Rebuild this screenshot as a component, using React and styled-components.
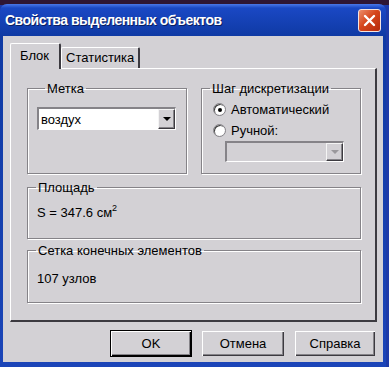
import React from 'react'
import styled, { createGlobalStyle } from 'styled-components'

const face = '#d3d1d5'
const shadow = '#858388'
const dark = '#3c3a40'

const Global = createGlobalStyle`
  html, body {
    margin: 0;
    padding: 0;
    background: linear-gradient(#2e1634 0, #2e1634 5px, #1d3aa8 5px);
    font-family: "Liberation Sans", Arial, sans-serif;
    font-size: 13px;
    color: #000;
  }
`

const Window = styled.div`
  width: 386px;
  margin-top: 4px;
  box-sizing: border-box;
  padding: 0 3px 5px 3px;
  border-radius: 7px 7px 0 0;
  background: linear-gradient(#4a78e8 0, #1a48c4 4px, #0f3aa4 32px, #1b45b8 100%);
  display: flex;
  flex-direction: column;
`

const TitleBar = styled.div`
  height: 32px;
  display: flex;
  align-items: center;
  justify-content: space-between;
  padding: 0 2px 0 2px;
`

const Title = styled.span`
  color: #fff;
  font-weight: bold;
  font-size: 14px;
  letter-spacing: -0.5px;
  text-shadow: 1px 1px 0 #0a1e60;
`

const CloseButton = styled.div`
  width: 21px;
  height: 21px;
  margin-top: 1px;
  border-radius: 3px;
  border: 1px solid #f4e4e0;
  background: linear-gradient(135deg, #ec8e6c 0%, #d6461c 45%, #b52a0c 100%);
  display: flex;
  align-items: center;
  justify-content: center;
`

const Body = styled.div`
  background: ${face};
  padding: 7px 6px 5px 7px;
  display: flex;
  flex-direction: column;
`

const Tabs = styled.div`
  display: flex;
  align-items: flex-end;
  height: 25px;
  position: relative;
  z-index: 1;
`

const Tab = styled.div`
  box-sizing: border-box;
  height: ${p => (p.active ? '26px' : '21px')};
  margin-bottom: ${p => (p.active ? '-1px' : '0')};
  padding: ${p => (p.active ? '4px 10px 0 9px' : '2px 4px 0 4px')};
  background: ${face};
  border-top: 1px solid #fff;
  border-left: 1px solid #fff;
  border-right: 2px solid ${dark};
  border-radius: 2px 2px 0 0;
  font-size: 13px;
  line-height: 16px;
`

const Panel = styled.div`
  box-sizing: border-box;
  height: 254px;
  border-top: 1px solid #fff;
  border-left: 1px solid #fff;
  border-right: 2px solid ${dark};
  border-bottom: 2px solid ${dark};
  padding: 12px 14px 0 16px;
  display: flex;
  flex-direction: column;
`

const Row = styled.div`
  display: flex;
  gap: 14px;
`

const Group = styled.fieldset`
  box-sizing: border-box;
  margin: ${p => p.mt || '0'} 0 0 0;
  padding: ${p => p.pad || '0'};
  height: ${p => p.h};
  width: ${p => p.w || 'auto'};
  border: 1px solid ${shadow};
  box-shadow: inset 1px 1px 0 #fff, 1px 1px 0 #fff;
  min-width: 0;
`

const Legend = styled.legend`
  margin-left: 8px;
  padding: 0 2px;
  font-size: 13px;
  line-height: 15px;
`

const Combo = styled.div`
  box-sizing: border-box;
  width: ${p => p.w};
  height: ${p => p.h || '23px'};
  margin: ${p => p.m || '0'};
  border-top: 2px solid ${shadow};
  border-left: 2px solid ${shadow};
  border-right: 1px solid #fff;
  border-bottom: 1px solid #fff;
  background: ${p => (p.disabled ? face : '#fff')};
  display: flex;
  align-items: stretch;
`

const ComboText = styled.div`
  flex: 1;
  padding-left: 2px;
  display: flex;
  align-items: center;
  font-size: 13px;
`

const ComboButton = styled.div`
  width: 17px;
  box-sizing: border-box;
  background: ${face};
  border-top: 1px solid #f4f4f4;
  border-left: 1px solid #f4f4f4;
  border-right: 1px solid ${dark};
  border-bottom: 1px solid ${dark};
  box-shadow: inset -1px -1px 0 ${shadow};
  display: flex;
  align-items: center;
  justify-content: center;
  &::after {
    content: '';
    border-left: 4px solid transparent;
    border-right: 4px solid transparent;
    border-top: 4px solid ${p => (p.disabled ? '#9a989c' : '#000')};
  }
`

const RadioRow = styled.div`
  display: flex;
  align-items: center;
  height: 21px;
  padding-left: 11px;
  gap: 5px;
  font-size: 13px;
`

const Radio = styled.span`
  width: 11px;
  height: 11px;
  border-radius: 50%;
  background: radial-gradient(circle, #fff 55%, #e4e2e6 100%);
  border: 1px solid ${shadow};
  box-shadow: inset 1px 1px 0 #404040;
  display: flex;
  align-items: center;
  justify-content: center;
  &::after {
    content: '';
    width: 4px;
    height: 4px;
    border-radius: 50%;
    background: ${p => (p.checked ? '#000' : 'transparent')};
  }
`

const Value = styled.div`
  font-size: 13px;
  line-height: 15px;
  padding-left: 9px;
  margin-top: ${p => p.mt};
`

const Sup = styled.sup`
  font-size: 9px;
  vertical-align: 6px;
  line-height: 0;
`

const Buttons = styled.div`
  display: flex;
  justify-content: flex-end;
  gap: 9px;
  padding-right: 1px;
  margin-top: 8px;
`

const Button = styled.div`
  box-sizing: border-box;
  width: ${p => p.w};
  height: 27px;
  background: ${face};
  border: 1px solid ${p => (p.primary ? '#000' : face)};
  box-shadow: ${p =>
    p.primary
      ? `inset 1px 1px 0 #fff, inset -1px -1px 0 #000, inset -2px -2px 0 ${shadow}`
      : `inset 1px 1px 0 #fff, inset -1px -1px 0 ${dark}, inset -2px -2px 0 ${shadow}`};
  display: flex;
  align-items: center;
  justify-content: center;
  font-size: 13px;
`

export default function App () {
  return (
    <>
      <Global />
      <Window>
        <TitleBar>
          <Title>Свойства выделенных объектов</Title>
          <CloseButton>
            <svg width='13' height='13' viewBox='0 0 13 13'>
              <path d='M2 2 L11 11 M11 2 L2 11' stroke='#fff' strokeWidth='2.4' strokeLinecap='round' />
            </svg>
          </CloseButton>
        </TitleBar>
        <Body>
          <Tabs>
            <Tab active>Блок</Tab>
            <Tab>Статистика</Tab>
          </Tabs>
          <Panel>
            <Row>
              <Group w='160px' h='93px' pad='0 0 0 9px'>
                <Legend>Метка</Legend>
                <Combo w='139px' m='11px 0 0 0'>
                  <ComboText>воздух</ComboText>
                  <ComboButton />
                </Combo>
              </Group>
              <Group w='160px' h='93px' pad='3px 0 0 0'>
                <Legend>Шаг дискретизации</Legend>
                <RadioRow>
                  <Radio checked />
                  Автоматический
                </RadioRow>
                <RadioRow>
                  <Radio />
                  Ручной:
                </RadioRow>
                <Combo w='119px' h='21px' m='0 0 0 23px' disabled>
                  <ComboText />
                  <ComboButton disabled />
                </Combo>
              </Group>
            </Row>
            <Group h='59px' mt='6px' pad='0'>
              <Legend>Площадь</Legend>
              <Value mt='10px'>
                S = 347.6 см<Sup>2</Sup>
              </Value>
            </Group>
            <Group h='60px' mt='4px' pad='0'>
              <Legend>Сетка конечных элементов</Legend>
              <Value mt='13px'>107 узлов</Value>
            </Group>
          </Panel>
          <Buttons>
            <Button w='82px' primary>OK</Button>
            <Button w='84px'>Отмена</Button>
            <Button w='82px'>Справка</Button>
          </Buttons>
        </Body>
      </Window>
    </>
  )
}
